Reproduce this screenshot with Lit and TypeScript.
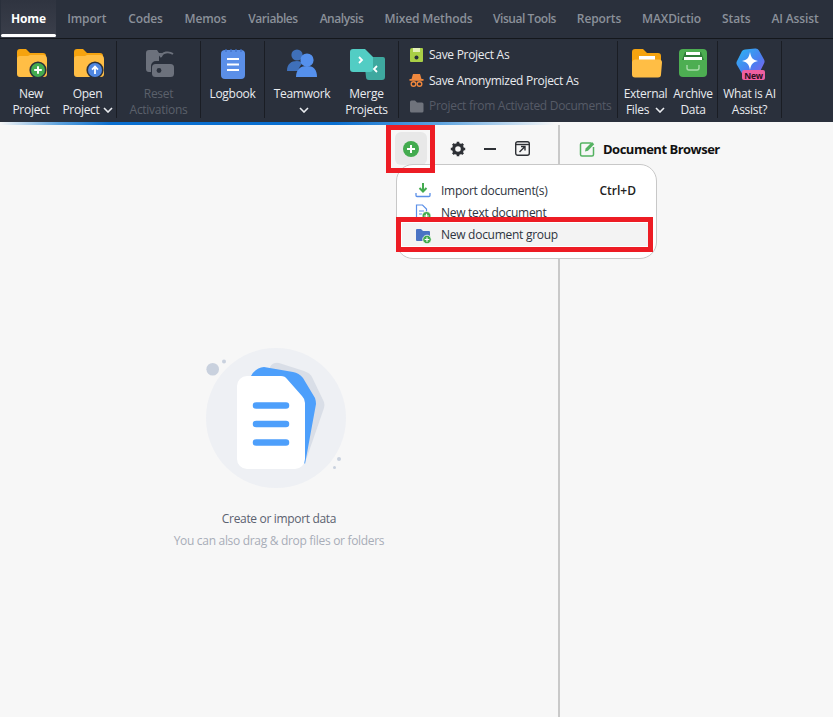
import { LitElement, html, css, svg } from "lit";
import { customElement } from "lit/decorators.js";

const folder = (badge: unknown) => svg`
  <path d="M4 6a3 3 0 0 1 3-3h6l4 4h13a3 3 0 0 1 3 3v12H4z" fill="#f5a30f"/>
  <path d="M4 13a3 3 0 0 1 3-3h8l2-1h13a4 4 0 0 1 4 4v15a3 3 0 0 1-3 3H7a3 3 0 0 1-3-3z" fill="#ffbe45"/>
  ${badge}`;

const chev = html`<svg class="chev" viewBox="0 0 10 6" width="10" height="6"><path d="M1 1l4 4 4-4" fill="none" stroke="currentColor" stroke-width="1.6"/></svg>`;

const icons: Record<string, unknown> = {
  newp: folder(svg`<circle cx="25" cy="24" r="8.6" fill="#2a303c"/><circle cx="25" cy="24" r="7" fill="#43ab4f"/><path d="M25 20.2v7.6M21.2 24h7.6" stroke="#fff" stroke-width="2"/>`),
  open: folder(svg`<circle cx="25" cy="24" r="8.6" fill="#2a303c"/><circle cx="25" cy="24" r="7" fill="#4f86e0"/><path d="M25 28v-7M22 23.6l3-3 3 3" fill="none" stroke="#fff" stroke-width="1.8"/>`),
  reset: svg`<path d="M5 7a3 3 0 0 1 3-3h8l2 3v8h-3a5 5 0 0 0-5 5v6H8a3 3 0 0 1-3-3z" fill="#6c717c"/>
    <rect x="11" y="18" width="22" height="13" rx="3.5" fill="#6c717c"/><circle cx="18" cy="24.5" r="2.4" fill="#2a303c"/>
    <path d="M20 11c1-5 8-6 12-3" fill="none" stroke="#6c717c" stroke-width="1.8"/><path d="M16 7l5 0-1 5z" fill="#6c717c"/>`,
  log: svg`<rect x="6" y="4" width="24" height="29" rx="4" fill="#5b8fe8"/>
    <path d="M11 3v3M16 3v3M21 3v3M26 3v3" stroke="#3f6ec2" stroke-width="1.2"/>
    <path d="M12 13h12M12 18.5h12M12 24h12" stroke="#fff" stroke-width="2"/>`,
  team: svg`<circle cx="13" cy="9" r="5.6" fill="#3f70ba"/><path d="M3 25c0-7 4-10 10-10 3 0 5 1 6 2-3 2-4 5-5 8z" fill="#3f70ba"/>
    <circle cx="23" cy="14" r="6.6" fill="#5590ec"/><path d="M12 31c0-8 5-11 11-11s10 3 10 11z" fill="#5590ec"/>`,
  merge: svg`<path d="M15 13a2 2 0 0 1 2-2h9l8 0a2 2 0 0 1 2 2v18a3 3 0 0 1-3 3H20a3 3 0 0 1-3-3z" fill="#3ea89f"/>
    <path d="M1 6a3 3 0 0 1 3-3h12l8 8v12a3 3 0 0 1-3 3H4a3 3 0 0 1-3-3z" fill="#52cdc4"/>
    <path d="M10 11l3 3-3 3" fill="none" stroke="#fff" stroke-width="1.8"/><path d="M28 20l-3 3 3 3" fill="none" stroke="#fff" stroke-width="1.8"/>`,
  ext: svg`<path d="M4 6a3 3 0 0 1 3-3h8l4 4h11a3 3 0 0 1 3 3v10H4z" fill="#f5a30f"/>
    <rect x="11" y="10" width="16" height="5" fill="#fff"/>
    <path d="M4 16a3 3 0 0 1 3-2.500h24a3 3 0 0 1 3 3l-1 12a3 3 0 0 1-3 3H7a3 3 0 0 1-3-3z" fill="#ffbe45"/>`,
  arch: svg`<rect x="4" y="3" width="28" height="28" rx="4" fill="#4dae52"/>
    <path d="M7 14l3-8h16l3 8z" fill="#2f7d3a"/>
    <rect x="11" y="6" width="14" height="3" fill="#fff"/><rect x="9" y="11" width="18" height="3" fill="#fff"/>
    <path d="M12 19v3a2 2 0 0 0 2 2h8a2 2 0 0 0 2-2v-3" fill="none" stroke="#a7dba9" stroke-width="1.4"/>`,
};

const ai = svg`
  <defs><linearGradient id="aig" x1="0" y1="0" x2="1" y2="1"><stop offset="0" stop-color="#28b8f2"/><stop offset=".6" stop-color="#4c7df0"/><stop offset="1" stop-color="#8c5ce8"/></linearGradient></defs>
  <path d="M9 3a4 4 0 0 1 3-1.500l10-1a4 4 0 0 1 4 2l5 9a4 4 0 0 1 0 4l-5 10a4 4 0 0 1-4 2H12a4 4 0 0 1-3-2L4 17a4 4 0 0 1 0-4z" fill="url(#aig)" transform="translate(1 2)"/>
  <path d="M18 6c1 6 3 8 8 9-5 1-7 3-8 9-1-6-3-8-8-9 5-1 7-3 8-9z" fill="#fff"/>
  <rect x="10" y="24" width="23" height="10" rx="2" fill="#ee5fa0"/>
  <text x="21.500" y="32.500" text-anchor="middle" class="newtxt">New</text>`;

const tabs: { t: string; w: number; tight?: boolean }[] = [
  { t: "Home", w: 55 },
  { t: "Import", w: 61.5 },
  { t: "Codes", w: 56 },
  { t: "Memos", w: 64 },
  { t: "Variables", w: 71, tight: true },
  { t: "Analysis", w: 66, tight: true },
  { t: "Mixed Methods", w: 108 },
  { t: "Visual Tools", w: 84, tight: true },
  { t: "Reports", w: 65 },
  { t: "MAXDictio", w: 80 },
  { t: "Stats", w: 49.5 },
  { t: "AI Assist", w: 68 },
];

@customElement("app-root")
export class AppRoot extends LitElement {
  static styles = css`
    :host { display: block; width: 833px; height: 717px; overflow: hidden; position: relative;
      font-family: "Open Sans", "Noto Sans", sans-serif; font-size: 12px; background: #f7f7f7; }
    .top { background: #2a303c; }
    .tabs { display: flex; height: 38px; border-bottom: 1px solid #14171c; padding-left: 1px; }
    .tab { display: flex; align-items: center; justify-content: center; height: 38px; padding: 0 0 1px; flex: none;
      font-weight: 600; color: #8b909a; white-space: nowrap; box-sizing: border-box; letter-spacing: -.12px; }
    .tab.tight { letter-spacing: -.45px; }
    .tab.on { color: #fff; background: linear-gradient(#2f3440, #3b3f4b); position: relative; font-weight: 700; }
    .tab.on::after { content: ""; position: absolute; left: 0; right: 0; bottom: 1px; height: 3px; border-radius: 2px; background: #fff; }
    .ribbon { display: flex; height: 83px; padding-left: 3px; }
    .item { display: flex; flex-direction: column; align-items: center; color: #e9ebef; line-height: 16px; padding-top: 7px; box-sizing: border-box; text-align: center; white-space: nowrap; letter-spacing: -.28px; }
    .item.off { color: #5b606b; }
    .icon { width: 36px; height: 36px; display: block; flex: none; margin-bottom: 4px; }
    .chev { margin-left: 3px; vertical-align: 1px; }
    .sep { width: 1px; margin: 2px 0 4px; background: #1a1d24; flex: none; }
    .sep.wide { margin-left: 4px; }
    .list { width: 218px; padding: 3px 0 0 10px; box-sizing: border-box; display: flex; flex-direction: column; color: #e9ebef; letter-spacing: -.29px; }
    .li { height: 25.500px; display: flex; align-items: center; gap: 5px; white-space: nowrap; }
    .li.off { color: #565b67; }
    .li svg { width: 15px; height: 16px; flex: none; }
    .newtxt { font: 700 8.500px "Open Sans", sans-serif; fill: #2a1020; }
    .bar { height: 3px; background: linear-gradient(90deg, #f7f7f7 0, #5aa0dc 60px, #0a6fd0 110px, #0a6fd0 335px, #5ea4e0 440px, #f7f7f7 555px); }
    .body { display: flex; height: 592px; }
    .left { width: 558px; border-right: 2px solid #c9c9c9; flex: none; display: flex; flex-direction: column; position: relative; }
    .tools { display: flex; align-items: flex-start; height: 46px; padding: 7px 0 0 395px; box-sizing: border-box; }
    .tbtn { width: 32px; height: 33px; display: flex; align-items: center; justify-content: center; flex: none; }
    .tbtn.add { background: #e8e8e8; border-radius: 6px; margin-right: 15px; }
    .empty { display: flex; flex-direction: column; align-items: center; padding-top: 159px; }
    .illus { width: 160px; height: 170px; display: block; }
    .t1 { color: #5b6270; margin-top: 10px; letter-spacing: -.33px; line-height: 18px; }
    .t2 { color: #a8adb8; margin-top: 4px; letter-spacing: -.31px; line-height: 18px; }
    .right { flex: 1; padding: 13px 0 0 19px; }
    .rh { display: flex; align-items: center; gap: 8px; font-weight: 700; font-size: 13px; color: #111; height: 22px; letter-spacing: -.5px; }
    .menu { position: absolute; left: 396px; top: 164px; width: 261px; height: 95px; box-sizing: border-box; background: #fff;
      border: 1px solid #c8c8c8; border-radius: 17px; padding: 14px 5px 0; color: #2e3440; letter-spacing: -.27px; }
    .mi { display: flex; align-items: center; height: 22px; padding: 0 15px 0 12px; gap: 9px; white-space: nowrap; }
    .mi svg { width: 18px; height: 18px; flex: none; }
    .mi .k { margin-left: auto; font-weight: 600; color: #222; letter-spacing: 0; }
    .mi.hl { background: #f3f3f3; height: 23px; }
    .mark { position: absolute; border: 5px solid #ed1c24; box-sizing: border-box; pointer-events: none; }
    .m1 { left: 386px; top: 125px; width: 49px; height: 48px; }
    .m2 { left: 396px; top: 217px; width: 257px; height: 35px; }
  `;

  private ribbonItem(w: number, icon: unknown, l1: string, l2: unknown, off = false) {
    return html`<div class="item ${off ? "off" : ""}" style="width:${w}px">
      <svg class="icon" viewBox="0 0 36 36">${icon}</svg>
      <span>${l1}</span><span>${l2}</span></div>`;
  }

  render() {
    return html`
      <div class="top">
        <div class="tabs">${tabs.map((t, i) => html`<div class="tab ${i === 0 ? "on" : ""} ${t.tight ? "tight" : ""}" style="width:${t.w}px">${t.t}</div>`)}</div>
        <div class="ribbon">
          ${this.ribbonItem(56, icons.newp, "New", "Project")}
          ${this.ribbonItem(57, icons.open, "Open", html`Project${chev}`)}
          <div class="sep"></div>
          ${this.ribbonItem(83, icons.reset, "Reset", "Activations", true)}
          <div class="sep"></div>
          ${this.ribbonItem(63, icons.log, "Logbook", "")}
          <div class="sep"></div>
          ${this.ribbonItem(74, icons.team, "Teamwork", chev)}
          ${this.ribbonItem(55, icons.merge, "Merge", "Projects")}
          <div class="sep wide"></div>
          <div class="list">
            <div class="li"><svg viewBox="0 0 15 16"><path d="M1 3a2 2 0 0 1 2-2h10a1 1 0 0 1 1 1v12a1 1 0 0 1-1 1H2a1 1 0 0 1-1-1z" fill="#a9cf46"/><rect x="4" y="1" width="7" height="4" fill="#e4f0b8"/><circle cx="7.500" cy="10.500" r="2" fill="#2a303c"/></svg>Save Project As</div>
            <div class="li"><svg viewBox="0 0 15 16"><path d="M4 2h7l1.500 5H2.500z" fill="#f0883e"/><rect x="0.500" y="7" width="14" height="1.800" fill="#f0883e"/><circle cx="4.500" cy="12" r="2.300" fill="none" stroke="#f0883e" stroke-width="1.400"/><circle cx="10.500" cy="12" r="2.300" fill="none" stroke="#f0883e" stroke-width="1.400"/></svg>Save Anonymized Project As</div>
            <div class="li off"><svg viewBox="0 0 15 16"><path d="M1 4a1.500 1.500 0 0 1 1.500-1.500H6l2 2h5a1.500 1.500 0 0 1 1.500 1.500v7a1.500 1.500 0 0 1-1.500 1.500H2.500A1.500 1.500 0 0 1 1 13z" fill="#6f737c"/></svg>Project from Activated Documents</div>
          </div>
          <div class="sep"></div>
          ${this.ribbonItem(55, icons.ext, "External", html`Files ${chev}`)}
          ${this.ribbonItem(40, icons.arch, "Archive", "Data")}
          <div class="sep wide"></div>
          ${this.ribbonItem(63, ai, "What is AI", "Assist?")}
          <div class="sep"></div>
        </div>
      </div>
      <div class="bar"></div>
      <div class="body">
        <div class="left">
          <div class="tools">
            <div class="tbtn add"><svg width="18" height="18" viewBox="0 0 18 18"><circle cx="9" cy="9" r="8" fill="#43ab4f"/><path d="M9 5v8M5 9h8" stroke="#fff" stroke-width="2"/></svg></div>
            <div class="tbtn"><svg width="16" height="16" viewBox="0 0 16 16"><circle cx="8" cy="8" r="4.400" fill="none" stroke="#2e3136" stroke-width="3.200"/><path d="M8 .8v3M8 12.200v3M.8 8h3M12.200 8h3M2.900 2.900l2.100 2.100M11 11l2.100 2.100M13.100 2.900L11 5M5 11l-2.100 2.100" stroke="#2e3136" stroke-width="2.600"/></svg></div>
            <div class="tbtn"><svg width="14" height="4" viewBox="0 0 14 4"><path d="M1 2h12" stroke="#2e3136" stroke-width="2"/></svg></div>
            <div class="tbtn"><svg width="15" height="15" viewBox="0 0 15 15"><rect x=".7" y=".7" width="13.600" height="13.600" rx="2" fill="none" stroke="#2e3136" stroke-width="1.400"/><path d="M1 3.500h13" stroke="#2e3136" stroke-width="1.400"/><path d="M4.500 11L10 5.500M6 5.500h4v4" fill="none" stroke="#2e3136" stroke-width="1.400"/></svg></div>
          </div>
          <div class="empty">
            <svg class="illus" viewBox="199 330 160 170">
              <circle cx="276" cy="418" r="70" fill="#eef0f4"/>
              <circle cx="212.700" cy="369.300" r="6.300" fill="#c9d1de"/>
              <circle cx="224" cy="361.500" r="2" fill="#c9d1de"/>
              <circle cx="339" cy="459" r="2" fill="#c9d1de"/>
              <circle cx="334.500" cy="467.500" r="1.500" fill="#c9d1de"/>
              <path d="M270 367q3-5 9-4l25 8q6 2 8 6l12 25q1 3 0 6l-19 55-40-60z" fill="#d9dee7"/>
              <path d="M251 376q4-8 13-9l29 5q6 1 10 6l12 20q1 3 1 6l-11 60-54-70z" fill="#4d9ffb"/>
              <path d="M237 386a10 10 0 0 1 10-10h34q4 0 6 3l15 17q3 3 3 7v56a10 10 0 0 1-10 10h-48a10 10 0 0 1-10-10z" fill="#fff"/>
              <path d="M256 405.500h30M256 424h30M256 442.500h30" stroke="#4d9ffb" stroke-width="6.500" stroke-linecap="round"/>
            </svg>
            <div class="t1">Create or import data</div>
            <div class="t2">You can also drag &amp; drop files or folders</div>
          </div>
        </div>
        <div class="right">
          <div class="rh"><svg width="16" height="16" viewBox="0 0 16 16"><path d="M12 2H3a1.500 1.500 0 0 0-1.500 1.500v10A1.500 1.500 0 0 0 3 15h10a1.500 1.500 0 0 0 1.500-1.500V6" fill="none" stroke="#55b262" stroke-width="1.500"/><path d="M6 10.500l.6-3L13 1l2.200 2.200L9 9.800z" fill="#55b262"/></svg>Document Browser</div>
        </div>
      </div>
      <div class="menu">
        <div class="mi"><svg viewBox="0 0 18 18"><path d="M9 2v8M5.500 7L9 10.500 12.500 7" fill="none" stroke="#43ab4f" stroke-width="2"/><path d="M2 12v2.500a1 1 0 0 0 1 1h12a1 1 0 0 0 1-1V12" fill="none" stroke="#5b8fe8" stroke-width="1.300"/></svg>Import document(s)<span class="k">Ctrl+D</span></div>
        <div class="mi"><svg viewBox="0 0 18 18"><path d="M2.500 2h6l4 4v9h-10z" fill="#fff" stroke="#5b8fe8" stroke-width="1.200"/><path d="M5 8h5M5 11h3" stroke="#5b8fe8"/><circle cx="12.500" cy="13" r="4.500" fill="#43ab4f" stroke="#fff" stroke-width=".8"/><path d="M12.500 10.800v4.400M10.300 13h4.400" stroke="#fff" stroke-width="1.200"/></svg>New text document</div>
        <div class="mi hl"><svg viewBox="0 0 18 18"><path d="M2 4a1 1 0 0 1 1-1h4l2 2h6a1 1 0 0 1 1 1v9H3a1 1 0 0 1-1-1z" fill="#4a73c4"/><circle cx="13" cy="13.500" r="4.300" fill="#43ab4f" stroke="#fff" stroke-width=".8"/><path d="M13 11.200v4.600M10.700 13.500h4.600" stroke="#fff" stroke-width="1.200"/></svg>New document group</div>
      </div>
      <div class="mark m1"></div>
      <div class="mark m2"></div>
    `;
  }
}
